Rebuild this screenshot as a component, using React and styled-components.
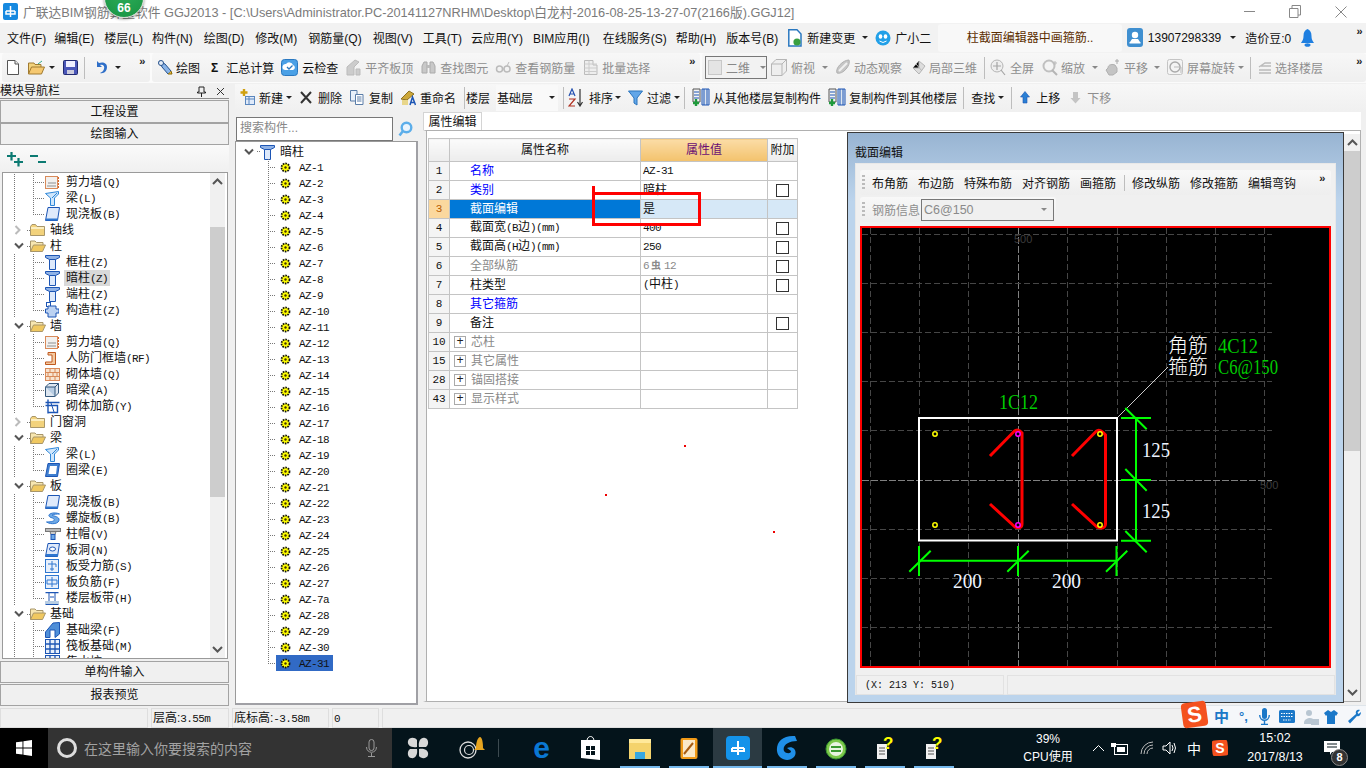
import React from 'react'
import styled, { createGlobalStyle } from 'styled-components'

const uiFont = `"Liberation Sans", "Noto Sans CJK SC", sans-serif`
const monoFont = `"Liberation Mono", "Noto Sans CJK SC", monospace`

const Global = createGlobalStyle`
  html, body { margin: 0; padding: 0; overflow: hidden; background: #f0f0f0; }
  * { box-sizing: border-box; }
`

const Page = styled.div`
  position: relative;
  width: 1366px;
  height: 768px;
  display: flex;
  flex-direction: column;
  overflow: hidden;
  font-family: ${uiFont};
  font-size: 12px;
  color: #111;
  background: #f0f0f0;
`

/* ---------- title bar ---------- */
const TitleBar = styled.div`
  height: 23px;
  flex: none;
  background: #fff;
  display: flex;
  align-items: center;
  padding-left: 3px;
`
const TitleText = styled.div`
  margin-left: 5px;
  color: #7b7b7b;
  font-size: 12.75px;
  white-space: nowrap;
`
const WinButtons = styled.div`
  margin-left: auto;
  padding-right: 2px;
  display: flex;
  align-items: center;
`
const WinBtn = styled.span`
  width: 46px;
  display: flex;
  justify-content: center;
`
const ScoreBadge = styled.div`
  position: absolute;
  left: 104px;
  top: -22px;
  width: 40px;
  height: 40px;
  border-radius: 50%;
  background: radial-gradient(circle at 50% 30%, #2fae5b, #1d9a48 75%);
  border: 1px solid #cfd8d0;
  box-shadow: 0 1px 3px rgba(0, 0, 0, 0.45);
  color: #fff;
  font-size: 12px;
  font-weight: bold;
  text-align: center;
  padding-top: 22px;
  line-height: 14px;
`

/* ---------- menu ---------- */
const MenuBar = styled.div`
  height: 30px;
  flex: none;
  display: flex;
  align-items: center;
  background: #f2f2f2;
  padding: 0 0 1px 7px;
  white-space: nowrap;
`
const MenuItem = styled.span`
  margin-left: ${({ $ml }) => $ml ?? 10}px;
  display: inline-flex;
  align-items: center;
  gap: ${({ $gap }) => $gap ?? 0}px;
`
const TipTab = styled.div`
  margin-left: 7px;
  width: 188px;
  height: 28px;
  background: #f8f8f8;
  border-radius: 3px;
  color: #5c2e00;
  text-align: center;
  line-height: 28px;
`

/* ---------- toolbars ---------- */
const ToolRow = styled.div`
  height: 30px;
  flex: none;
  display: flex;
  gap: 2px;
  padding: 0 0 1px 2px;
  background: #fbfbfb;
`
const ToolGroup = styled.div`
  width: ${({ $w }) => ($w ? `${$w}px` : 'auto')};
  flex: ${({ $w }) => ($w ? 'none' : 1)};
  display: flex;
  align-items: center;
  white-space: nowrap;
  border-radius: 3px;
  background: linear-gradient(#f7f7f7, #efefef);
`
const Tool = styled.span`
  margin-left: ${({ $ml }) => $ml ?? 0}px;
  display: inline-flex;
  align-items: center;
  flex: none;
  gap: ${({ $gap }) => $gap ?? 3}px;
  color: ${({ $off }) => ($off ? '#8e8e8e' : '#111')};
`
const Sep = styled.span`
  margin-left: ${({ $ml }) => $ml ?? 0}px;
  margin-right: ${({ $mr }) => $mr ?? 0}px;
  width: 1px;
  height: ${({ $h }) => $h ?? 22}px;
  flex: none;
  background: #bdbdbd;
`
const Caret = styled.span`
  margin-left: ${({ $ml }) => $ml ?? 0}px;
  width: 0;
  height: 0;
  flex: none;
  border: 3px solid transparent;
  border-top: 3px solid ${({ $off }) => ($off ? '#888' : '#222')};
  border-bottom: 0;
`
const More = styled.span`
  margin-left: ${({ $ml }) => ($ml === undefined ? 'auto' : `${$ml}px`)};
  margin-right: ${({ $mr }) => $mr ?? 0}px;
  align-self: flex-start;
  margin-top: 3px;
  font: bold 11px/12px ${monoFont};
  letter-spacing: -2px;
  color: #222;
  width: 10px;
`
const ViewSelect = styled.div`
  margin-left: 3px;
  width: 62px;
  height: 23px;
  flex: none;
  display: flex;
  align-items: center;
  border: 1px solid #777;
  background: #f2f2f2;
  color: #888;
  padding-left: 2px;
  gap: 4px;
`
const Swatch = styled.span`
  width: 15px;
  height: 15px;
  background: #e4e4e4;
  border: 1px solid #c8c8c8;
`

/* ---------- body ---------- */
const Body = styled.div`
  height: 625px;
  flex: none;
  display: flex;
  background: #f0f0f0;
`
const LeftPanel = styled.aside`
  width: 229px;
  flex: none;
  display: flex;
  flex-direction: column;
  padding-top: 1px;
  background: #f0f0f0;
`
const DockHeader = styled.div`
  height: 15px;
  flex: none;
  display: flex;
  align-items: center;
  line-height: 14px;
  border-bottom: 1px solid #8c8c8c;
  padding-right: 4px;
  gap: 10px;
  margin-bottom: 1px;
`
const DockTitle = styled.span`
  margin-right: auto;
`
const NavButton = styled.div`
  height: ${({ $h }) => $h ?? 22}px;
  flex: none;
  margin-top: ${({ $mt }) => $mt ?? 0}px;
  border: 1px solid #a3a3a3;
  background: #f0f0f0;
  text-align: center;
  line-height: ${({ $h }) => ($h ?? 22) - 1}px;
`
const TreeTools = styled.div`
  height: 27px;
  flex: none;
  display: flex;
  align-items: center;
  gap: 7px;
  padding-left: 7px;
  background: linear-gradient(#fafafa, #f0f0f0);
`
const LeftTreeBox = styled.div`
  height: 487px;
  flex: none;
  margin: 0 1px 0 2px;
  display: flex;
  border: 1px solid #9a9a9a;
  background: #fff;
  overflow: hidden;
`
const TreeScroll = styled.div`
  flex: 1;
  min-width: 0;
  padding-top: 1px;
  overflow: hidden;
`
const Row = styled.div`
  display: flex;
  align-items: stretch;
  height: ${({ $h }) => $h ?? 16}px;
  padding-left: ${({ $pad }) => $pad ?? 11}px;
  white-space: nowrap;
`
const Guide = styled.span`
  flex: none;
  width: 19px;
  background: repeating-linear-gradient(to bottom, #777 0 1px, transparent 1px 2px) 0 0 / 1px 100% no-repeat;
`
const Elbow = styled.span`
  flex: none;
  width: ${({ $w }) => $w ?? 12}px;
  background:
    repeating-linear-gradient(to bottom, #777 0 1px, transparent 1px 2px) 0 0 / 1px ${({ $last }) => ($last ? '50%' : '100%')} no-repeat,
    repeating-linear-gradient(to right, #777 0 1px, transparent 1px 2px) 0 50% / 100% 1px no-repeat;
`
const Toggle = styled.span`
  flex: none;
  width: 13px;
  display: flex;
  align-items: center;
`
const Stub = styled.span`
  flex: none;
  width: 3px;
  background: repeating-linear-gradient(to right, #777 0 1px, transparent 1px 2px) 0 50% / 100% 1px no-repeat;
`
const RowIcon = styled.span`
  flex: none;
  display: flex;
  align-items: center;
  width: ${({ $w }) => $w ?? 15}px;
`
const RowLabel = styled.span`
  margin-left: ${({ $ml }) => $ml ?? 5}px;
  padding: 0 ${({ $pad }) => $pad ?? 0}px;
  line-height: 16px;
  background: ${({ $sel }) => $sel ?? 'transparent'};
`
const ItemBox = styled.span`
  display: flex;
  align-items: stretch;
  padding: 0 4px;
  background: ${({ $sel }) => ($sel ? '#316ac5' : 'transparent')};
`
const Latin = styled.span`
  font-family: ${monoFont};
  font-size: 11px;
  letter-spacing: -0.6px;
  color: ${({ $color }) => $color ?? 'inherit'};
`
const RebarMark = styled.span`
  font-size: 10px;
  font-weight: bold;
  margin: 0 3px 0 2px;
`
const Scrollbar = styled.div`
  flex: none;
  width: ${({ $w }) => $w ?? 15}px;
  display: flex;
  flex-direction: column;
  background: #f0f0f0;
  margin-top: ${({ $mt }) => $mt ?? 0}px;
  margin-right: ${({ $mr }) => $mr ?? 0}px;
`
const ScrollArrow = styled.div`
  height: 17px;
  flex: none;
  display: flex;
  align-items: center;
  justify-content: center;
`
const Track = styled.div`
  flex: 1;
  min-height: 0;
`
const Thumb = styled.div`
  margin-top: ${({ $top }) => $top}px;
  height: ${({ $h }) => $h}px;
  background: #cdcdcd;
`

const Workspace = styled.main`
  flex: 1;
  min-width: 0;
  margin-left: 6px;
  display: flex;
  flex-direction: column;
`
const EditToolbar = styled.div`
  height: 27px;
  flex: none;
  margin-top: 1px;
  display: flex;
  align-items: center;
  white-space: nowrap;
  background: linear-gradient(#f7f7f7, #f0f0f0);
`
const FloorField = styled.div`
  margin-left: 6px;
  width: 62px;
  height: 26px;
  flex: none;
  display: flex;
  align-items: center;
  padding: 0 3px 0 1px;
  justify-content: space-between;
  background: #f9f9f9;
`
const Columns = styled.div`
  flex: 1;
  min-height: 0;
  display: flex;
  gap: 5px;
`
const ComponentCol = styled.section`
  width: 183px;
  flex: none;
  display: flex;
  flex-direction: column;
  padding-top: 6px;
  padding-bottom: 3px;
`
const SearchRow = styled.div`
  height: 24px;
  flex: none;
  display: flex;
  align-items: center;
  padding-left: 1px;
  background: #f0f0f0;
`
const SearchBox = styled.div`
  width: 157px;
  height: 24px;
  border: 1px solid #777;
  background: #fff;
  color: #888;
  padding-left: 3px;
  line-height: 21px;
`
const SearchIcon = styled.span`
  margin-left: 5px;
  display: flex;
`
const ComponentTree = styled.div`
  flex: 1;
  min-height: 0;
  background: #fff;
  border: 1px solid #9a9a9a;
  border-right: 2px solid #a0a0a5;
  border-bottom: 2px solid #a0a0a5;
  padding-top: 2px;
  overflow: hidden;
`
const PropCol = styled.section`
  width: 938px;
  flex: none;
  display: flex;
  flex-direction: column;
  padding-top: 1px;
  padding-bottom: 6px;
`
const TabStrip = styled.div`
  height: 18px;
  flex: none;
  display: flex;
  background: #fff;
`
const Tab = styled.div`
  width: 59px;
  text-align: center;
  line-height: 18px;
  background: #fff;
  border: 1px solid #d4d4d4;
  border-bottom: 0;
`
const PropPanel = styled.div`
  flex: 1;
  min-height: 0;
  display: flex;
  background: #fff;
  border: 1px solid #b0b0b0;
  border-left: 3px solid #f0f0f0;
  padding-right: 0;
`
const PropBody = styled.div`
  flex: 1;
  min-width: 0;
  padding-top: 7px;
  border-left: 1px solid #b0b0b0;
`
const PropTable = styled.table`
  width: 369px;
  border-collapse: collapse;
  table-layout: fixed;
  margin-left: 1px;
  line-height: 15px;
  & tbody tr { height: 19px; }
`
const HeadCell = styled.th`
  height: 23px;
  padding: 0;
  font-weight: normal;
  border: 1px solid #c4c4c4;
  background: ${({ $active }) =>
    $active ? 'linear-gradient(#fbdca6, #f3c26c)' : 'linear-gradient(#fbfbfb, #ececec)'};
  color: ${({ $active }) => ($active ? '#6a0f74' : '#111')};
`
const NumCell = styled.td`
  height: 19px;
  padding: 0;
  text-align: center;
  font-family: ${monoFont};
  font-size: 11px;
  border: 1px solid #c4c4c4;
  background: ${({ $sel }) => ($sel ? '#fbd89e' : '#f4f4f4')};
  color: ${({ $sel }) => ($sel ? '#b85c00' : '#111')};
`
const NameCell = styled.td`
  height: 19px;
  padding: 0 0 0 ${({ $plus }) => ($plus ? 4 : 20)}px;
  border: 1px solid #c4c4c4;
  white-space: nowrap;
  background: ${({ $sel }) => ($sel ? '#0078d7' : '#fff')};
  color: ${({ $sel, $tone }) => ($sel ? '#fff' : $tone ?? '#111')};
`
const PlusBox = styled.span`
  display: inline-flex;
  align-items: center;
  justify-content: center;
  width: 12px;
  height: 12px;
  margin-right: 5px;
  border: 1px solid #aaa;
  color: #222;
  font: 12px/10px ${monoFont};
  vertical-align: top;
  margin-top: 1px;
`
const ValueCell = styled.td`
  height: 19px;
  padding: 0 0 0 2px;
  border: 1px solid #c4c4c4;
  white-space: nowrap;
  overflow: hidden;
  background: ${({ $sel }) => ($sel ? '#d6e8f7' : '#fff')};
  color: ${({ $tone }) => $tone ?? '#111'};
`
const AddCell = styled.td`
  height: 19px;
  padding: 0;
  border: 1px solid #c4c4c4;
  text-align: center;
  background: ${({ $sel }) => ($sel ? '#d6e8f7' : '#fff')};
`
const CheckBox = styled.span`
  display: inline-block;
  width: 13px;
  height: 13px;
  border: 1px solid #333;
  background: #fff;
  vertical-align: middle;
`

/* ---------- floating things ---------- */
const Marker = styled.div`
  position: absolute;
  left: 592px;
  top: 192px;
  width: 109px;
  height: 34px;
  border: 3.5px solid #f00;
  &::before {
    content: '';
    position: absolute;
    left: -3.5px;
    top: -9px;
    width: 3.5px;
    height: 6px;
    background: #f00;
  }
`
const RedDot = styled.span`
  position: absolute;
  left: ${({ $x }) => $x}px;
  top: ${({ $y }) => $y}px;
  width: 2px;
  height: 2px;
  background: #e00;
`
const Dialog = styled.div`
  position: absolute;
  left: 847px;
  top: 132px;
  width: 497px;
  height: 571px;
  display: flex;
  flex-direction: column;
  border: 1px solid #3a3a3a;
  border-top-width: 1px;
  background: linear-gradient(#98b4d2, #bcd4ec 12%, #bcd4ec);
  padding: 0 7px 7px 7px;
`
const DialogTitle = styled.div`
  height: 30px;
  flex: none;
  line-height: 40px;
  color: #111;
`
const DialogInner = styled.div`
  flex: 1;
  min-height: 0;
  display: flex;
  flex-direction: column;
  background: #f0f0f0;
  border: 1px solid #e8e8e8;
  padding: 6px 4px 0 4px;
`
const DlgToolbar = styled.div`
  height: 25px;
  flex: none;
  width: ${({ $w }) => ($w ? `${$w}px` : 'auto')};
  margin-bottom: 2px;
  display: flex;
  align-items: center;
  gap: 10px;
  white-space: nowrap;
  border-radius: 3px;
  background: linear-gradient(#f8f8f8, #eeeeee);
  padding-left: 2px;
`
const Grip = styled.span`
  flex: none;
  width: 3px;
  height: 15px;
  margin-right: -3px;
  background: repeating-linear-gradient(to bottom, #bbb 0 2px, transparent 2px 4px);
`
const RebarSelect = styled.div`
  margin-left: -9px;
  width: 133px;
  height: 22px;
  display: flex;
  align-items: center;
  justify-content: space-between;
  border: 1px solid #777;
  padding: 0 6px 0 2px;
  color: #8a8a8a;
  font-size: 12.5px;
  background: #f0f0f0;
`
const CadCanvas = styled.div`
  height: 442px;
  flex: none;
  margin-top: 2px;
  border: 2px solid #f00;
  background: #000;
  & > svg { display: block; }
`
const DlgStatus = styled.div`
  height: 20px;
  flex: none;
  margin: 7px -4px 0;
  display: flex;
  gap: 3px;
`
const DlgStatusCell = styled.div`
  width: ${({ $w }) => ($w ? `${$w}px` : 'auto')};
  flex: ${({ $w }) => ($w ? 'none' : 1)};
  border: 1px solid #e2e2e2;
  display: flex;
  align-items: center;
  padding-left: 8px;
  font-family: ${monoFont};
  font-size: 10px;
`

/* ---------- status bar ---------- */
const StatusBar = styled.footer`
  height: 20px;
  flex: none;
  display: flex;
  gap: 3px;
  background: #f0f0f0;
`
const StatusCell = styled.div`
  width: ${({ $w }) => ($w ? `${$w}px` : 'auto')};
  flex: ${({ $w }) => ($w ? 'none' : 1)};
  border: 1px solid #dedede;
  padding-left: 1px;
  line-height: 18px;
  white-space: nowrap;
`
const ImeBar = styled.div`
  position: absolute;
  left: 1195px;
  top: 705px;
  width: 171px;
  height: 23px;
  display: flex;
  align-items: center;
  background: #f5f7fa;
  border: 1px solid #dfe5ea;
  border-right: 0;
  color: #1b78c8;
`
const ImeLogo = styled.div`
  position: absolute;
  z-index: 1;
  left: 1182px;
  top: 702px;
  width: 25px;
  height: 25px;
  border-radius: 4px;
  transform: rotate(-8deg);
  background: #f4511e;
  color: #fff;
  font: bold 22px/25px "Liberation Sans", sans-serif;
  text-align: center;
`
const ImeGlyph = styled.span`
  margin-left: ${({ $ml }) => $ml}px;
  font: bold ${({ $size }) => $size ?? 15}px/18px ${uiFont};
  display: flex;
`

/* ---------- taskbar ---------- */
const Taskbar = styled.div`
  height: 40px;
  flex: none;
  display: flex;
  align-items: stretch;
  background: #04141b;
  color: #fff;
`
const StartButton = styled.div`
  width: 48px;
  flex: none;
  background: #000;
  display: flex;
  align-items: center;
  justify-content: center;
`
const SearchBar = styled.div`
  width: 344px;
  flex: none;
  background: #333;
  display: flex;
  align-items: center;
  padding-left: 9px;
  color: #a2a2a2;
  font-size: 14px;
`
const Cortana = styled.span`
  width: 20px;
  height: 20px;
  border: 3px solid #ddd;
  border-radius: 50%;
  margin-right: 7px;
`
const MicSlot = styled.span`
  margin-left: auto;
  margin-right: 15px;
  display: flex;
`
const TaskSlot = styled.div`
  width: ${({ $w }) => $w ?? 49}px;
  flex: none;
  display: flex;
  align-items: center;
  justify-content: center;
  margin-left: ${({ $ml }) => $ml ?? 0}px;
  background-color: ${({ $active }) => ($active ? '#2b3a42' : 'transparent')};
  background-image: ${({ $open }) => ($open ? 'linear-gradient(#76b9ed, #76b9ed)' : 'none')};
  background-repeat: no-repeat;
  background-position: center bottom;
  background-size: ${({ $active }) => ($active ? '100%' : '40px')} 2px;
`
const TaskDivider = styled.span`
  width: 1px;
  height: 18px;
  align-self: center;
  margin-left: 1px;
  flex: none;
  background: #3c4a50;
`
const TrayCpu = styled.div`
  margin-left: 66px;
  width: 48px;
  flex: none;
  text-align: center;
  display: flex;
  flex-direction: column;
  justify-content: center;
  align-items: center;
  line-height: 18px;
  font-size: 12px;
  white-space: nowrap;
`
const TrayIcons = styled.div`
  margin-left: 20px;
  display: flex;
  align-items: center;
  flex: none;
`
const TrayItem = styled.span`
  margin-left: ${({ $ml }) => $ml ?? 0}px;
  display: flex;
  font-size: ${({ $size }) => $size ?? 13}px;
`
const TrayClock = styled.div`
  margin-left: 17px;
  width: 60px;
  flex: none;
  text-align: center;
  display: flex;
  flex-direction: column;
  justify-content: center;
  line-height: 19px;
  font-size: 12.5px;
`
const Notify = styled.div`
  margin-left: 19px;
  position: relative;
  display: flex;
  align-items: center;
`
const NotifyCount = styled.span`
  position: absolute;
  left: 7px;
  top: 21px;
  width: 17px;
  height: 17px;
  border-radius: 50%;
  background: #333;
  border: 1px solid #888;
  font-size: 11px;
  font-weight: bold;
  line-height: 15px;
  text-align: center;
`
const LogoText = styled.span`
  font: bold ${({ $size }) => $size}px/1 "Liberation Sans", sans-serif;
  color: ${({ $color }) => $color};
`

/* ---------- drawings ---------- */
const Svg = ({ w = 16, h = 16, vb, children, ...rest }) => (
  <svg width={w} height={h} viewBox={vb || `0 0 ${w} ${h}`} style={{ flex: 'none', display: 'block' }} {...rest}>{children}</svg>
)

const ChevronDown = () => (
  <Svg w={10} h={8}><polyline points="1,1.5 5,5.5 9,1.5" fill="none" stroke="#555" strokeWidth="2" /></Svg>
)
const ChevronRight = () => (
  <Svg w={8} h={10}><polyline points="1.5,1 5.5,5 1.5,9" fill="none" stroke="#bbb" strokeWidth="2" /></Svg>
)
const treeIcons = {
  closed: (
    <Svg w={15} h={12}>
      <path d="M.5 2.5 V11.5 H14.5 V2.5 H7 L5.5 .5 H2 Z" fill="#f2d27c" stroke="#a8966a" />
      <rect x="1" y="3" width="13" height="2" fill="#fbeec0" />
    </Svg>
  ),
  open: (
    <Svg w={16} h={12}>
      <path d="M.5 11.5 V1 H5 L6.5 2.5 H13 V5" fill="#f7e6b0" stroke="#a8966a" />
      <path d="M.5 11.5 L3.5 5 H15.5 L12.5 11.5 Z" fill="#f0c860" stroke="#a8966a" />
    </Svg>
  ),
  column: (
    <Svg w={15} h={16}>
      <path d="M.5 1.5 H14.5 V3.5 L10.5 5.5 H4.5 L.5 3.5 Z" fill="#8fb2e6" stroke="#1c55b4" />
      <path d="M4.5 5.5 H10.5 V15.5 H4.5 Z" fill="#dde9fb" stroke="#1c55b4" />
    </Svg>
  ),
  gcolumn: (
    <Svg w={14} h={16}>
      <rect x="1.5" y=".5" width="4" height="4" fill="#fff" stroke="#1c55b4" />
      <path d="M3 4 H11 V7 H14 V11 H11 V15 H3 V11 H.5 V7 H3 Z" fill="#bcd2f2" stroke="#1c55b4" />
    </Svg>
  ),
  wall: (
    <Svg w={14} h={13}>
      <rect x=".5" y=".5" width="12" height="12" fill="#f2f0ee" stroke="#d88a5a" />
      <path d="M2 9h9v2H2zM3 6h8v2H3z" fill="#c0c0c0" />
      <path d="M13.5 1v11" stroke="#d8662a" strokeDasharray="2 1" />
    </Svg>
  ),
  beam: (
    <Svg w={14} h={15}>
      <path d="M.5 2.5 L13.5 .5 V3 L9.5 7 V14.5 H5.5 V7 Z" fill="#cfe6fb" stroke="#2f87d8" />
      <path d="M7 7 L12 2" stroke="#2f87d8" />
    </Svg>
  ),
  slab: (
    <Svg w={15} h={14}>
      <path d="M3 .5 H14.5 L12.5 13.5 H.5 Z" fill="#dfeafb" stroke="#1c55b4" />
      <path d="M1 11.5 H13 V13.5 H1 Z" fill="#2f77d0" />
    </Svg>
  ),
  ringbeam: (
    <Svg w={15} h={14}>
      <path d="M3 .5 H14.5 L12.5 13.5 H.5 Z" fill="#3f7fd0" stroke="#1c55b4" />
      <path d="M5 3 H12 L11 11 H3.5 Z" fill="#fff" />
    </Svg>
  ),
  door: (
    <Svg w={13} h={13}>
      <path d="M3 .5 H10.5 V12.5 H.5 V10 H7 V3 H3 Z" fill="#f4c9a0" stroke="#c05a20" />
    </Svg>
  ),
  brick: (
    <Svg w={15} h={13}>
      <rect x=".5" y=".5" width="14" height="12" fill="#f8e4d0" stroke="#d88a5a" />
      <path d="M1 4.5h13M1 8.5h13M5 1v3.5M10 1v3.5M3 4.5v4M8 4.5v4M12 4.5v4M5 8.5v4M10 8.5v4" stroke="#d88a5a" />
    </Svg>
  ),
  hidden: (
    <Svg w={14} h={14}>
      <path d="M.5 4 L4 .5 H13.5 V10 L10 13.5 H.5 Z" fill="#dde6f0" stroke="#33567a" />
      <path d="M.5 4 H10 V13.5 M10 4 L13.5 .5" fill="#b8cde3" stroke="#33567a" />
    </Svg>
  ),
  bar: (
    <Svg w={15} h={15}>
      <path d="M.5 3.5 H14.5 M3 .5 V14.5 M.5 6.5 H12.5 V13.5 H3" fill="none" stroke="#1c55b4" strokeWidth="1.4" />
      <path d="M6 4 L9 13" stroke="#1c55b4" />
    </Svg>
  ),
  spiral: (
    <Svg w={16} h={13}>
      <path d="M14.5 2 C8 -1 0 3 6 5.5 C11 7 11 10 1.5 10 C6 13 15 12 14 7 C13 4 7 4 7 3 C9 2 12 2 14.5 2 Z" fill="#6ea9e6" stroke="#2f77d0" />
    </Svg>
  ),
  cap: (
    <Svg w={16} h={12}>
      <rect x=".5" y=".5" width="15" height="3" fill="#bbb" stroke="#777" />
      <path d="M5 3.5 H11 L10 6.5 H6 Z" fill="#ccc" stroke="#777" />
      <rect x="6" y="6.5" width="4" height="5" fill="#6ea9e6" stroke="#1c55b4" />
    </Svg>
  ),
  hole: (
    <Svg w={15} h={14}>
      <path d="M3 .5 H14.5 L12.5 13.5 H.5 Z" fill="#dfeafb" stroke="#1c55b4" />
      <path d="M1 11 H13 V13.5 H1 Z" fill="#2f77d0" />
      <ellipse cx="7.5" cy="6" rx="3" ry="2" fill="#fff" stroke="#1c55b4" />
    </Svg>
  ),
  slabbar: (
    <Svg w={14} h={14}>
      <rect x=".5" y=".5" width="13" height="13" fill="#e8f0fb" stroke="#2f77d0" />
      <path d="M7 2 V12 M3 5 H11 V8 M5 10 L9 10" fill="none" stroke="#2f77d0" />
    </Svg>
  ),
  negbar: (
    <Svg w={14} h={14}>
      <rect x=".5" y=".5" width="13" height="13" fill="#e8f0fb" stroke="#2f77d0" />
      <path d="M2 5 H12 V9 H2 Z M7 2 V12" fill="none" stroke="#2f77d0" />
    </Svg>
  ),
  strip: (
    <Svg w={14} h={13}>
      <path d="M.5 .5 H13.5 M.5 12.5 H13.5" stroke="#1c55b4" strokeWidth="1.5" />
      <path d="M4 1 V12 M10 1 V12 M5 5 H9" fill="none" stroke="#1c55b4" />
      <rect x="0" y="9" width="14" height="3" fill="#b8cde3" />
    </Svg>
  ),
  foundbeam: (
    <Svg w={15} h={16}>
      <path d="M.5 15.5 V10 L8 1 L14.5 .5 V12 L10 15.5 V8 L5 8 V15.5 Z" fill="#4f8fd8" stroke="#1c55b4" />
    </Svg>
  ),
  raft: (
    <Svg w={15} h={15}>
      <rect x=".5" y=".5" width="14" height="14" fill="#e8f0fb" stroke="#1c55b4" />
      <path d="M5 1V14M10 1V14M1 5H14M1 10H14" stroke="#1c55b4" strokeWidth="1.3" />
    </Svg>
  ),
}

const GearIcon = () => (
  <Svg w={11} h={11}>
    <circle cx="5.5" cy="5.5" r="4" fill="#ff0" stroke="#111" strokeWidth="1.8" strokeDasharray="1.6 1" />
    <circle cx="5.5" cy="5.5" r="1.2" fill="#443300" />
  </Svg>
)

const toolIcons = {
  newDoc: <Svg w={12} h={15}><path d="M.5 .5 H8 L11.5 4 V14.5 H.5 Z" fill="#fff" stroke="#555" /><path d="M8 .5 V4 H11.5" fill="#eee" stroke="#555" /></Svg>,
  open: <Svg w={17} h={15}><path d="M.5 14 V3 H6 L7 4.5 H13 V7" fill="#f2d27c" stroke="#a07a30" /><path d="M.5 14 L3.5 7 H16.5 L13.5 14 Z" fill="#f5c870" stroke="#a07a30" /><path d="M10 4 L14 1" stroke="#3a8" /></Svg>,
  save: <Svg w={15} h={15}><rect x=".5" y=".5" width="14" height="14" rx="1" fill="#4a56b8" stroke="#222a70" /><rect x="3" y="1" width="9" height="6" fill="#eef" /><rect x="4" y="10" width="7" height="4" fill="#ccd" /></Svg>,
  undo: <Svg w={14} h={15}><path d="M3 1 L3 7 L8 7 L6 5 C9 4 11 6 10 9 C9.5 11 8 12 6 13 C10 14 13 11 13 7 C13 3 9 1.5 5 3 Z" fill="#2f6fc8" /></Svg>,
  draw: <Svg w={17} h={17}><path d="M2 2 L8 5 L14 12 L11 15 L5 8 Z" fill="#8ab4e8" stroke="#24508c" /><path d="M11 15 L15 15 L14 12" fill="#f0c040" stroke="#886600" /><circle cx="4" cy="4" r="2.5" fill="#e6eef8" stroke="#24508c" /></Svg>,
  cloud: <Svg w={17} h={17}><rect x=".5" y=".5" width="16" height="16" rx="3" fill="#4aa0e6" stroke="#2a78c0" /><path d="M4 11 a3 3 0 0 1 1-6 a4 4 0 0 1 7 1 a2.6 2.6 0 0 1 0 5 Z" fill="#fff" /><path d="M6 8 L8 10 L11.5 6.5" fill="none" stroke="#2a78c0" strokeWidth="1.3" /></Svg>,
  level: <Svg w={15} h={17}><path d="M1 8 L9 1 L13 3 L8 8 V16 H1 Z M10 10 H14 V16 H10 Z" fill="#ccc" stroke="#bbb" /></Svg>,
  binoculars: <Svg w={15} h={15}><path d="M1 13 V6 L3 2 H6 V13 Z M14 13 V6 L12 2 H9 V13 Z" fill="#c8c8c8" stroke="#aaa" /><rect x="6" y="5" width="3" height="3" fill="#bbb" /></Svg>,
  glasses: <Svg w={16} h={15}><circle cx="4.5" cy="9" r="3" fill="none" stroke="#bbb" strokeWidth="1.5" /><circle cx="12" cy="9" r="3" fill="none" stroke="#bbb" strokeWidth="1.5" /><path d="M7.5 9 H9 M12 6 L14 2" stroke="#bbb" /></Svg>,
  batch: <Svg w={15} h={17}><path d="M1.5 1.5 H10 V6 H14 V15.5 H1.5 Z" fill="#eee" stroke="#bbb" /><path d="M1.5 5 H14 M1.5 9 H14 M1.5 12.5 H14 M6 1.5 V15.5" stroke="#ccc" /></Svg>,
  cube: <Svg w={16} h={17}><path d="M.5 5 L5 .5 H15.5 V12 L11 16.5 H.5 Z" fill="#eee" stroke="#b5b5b5" /><path d="M.5 5 H11 V16.5 M11 5 L15.5 .5" fill="none" stroke="#b5b5b5" /></Svg>,
  orbit: <Svg w={16} h={17}><path d="M2 14 C0 9 8 1 14 1 C16 6 8 16 2 14 Z" fill="#c6c6c6" stroke="#b0b0b0" /><path d="M4 12 L12 4" stroke="#f0f0f0" strokeWidth="2" /></Svg>,
  local3d: <Svg w={14} h={15}><path d="M7 1 L13 6 L7 14 L1 8 Z" fill="#ddd" stroke="#b5b5b5" /><path d="M4 4 L10 11 M7 1 L7 8 L1 8" stroke="#b5b5b5" /></Svg>,
  fit: <Svg w={16} h={17}><circle cx="7" cy="7" r="6" fill="#eee" stroke="#b5b5b5" /><path d="M7 3 V11 M3 7 H11 M11 11 L15 16" stroke="#a5a5a5" strokeWidth="1.2" /></Svg>,
  zoom: <Svg w={16} h={17}><circle cx="7" cy="7" r="5.5" fill="#f4f4f4" stroke="#c0c0c0" strokeWidth="2" /><path d="M10 11 L15 16" stroke="#b5b5b5" strokeWidth="2" /><path d="M13 2 V6 M11 4 H15" stroke="#bbb" /></Svg>,
  pan: <Svg w={16} h={17}><path d="M3 9 C3 5 8 5 10 6 L12 9 V13 L8 16 H4 L1 11 Z" fill="#c4c4c4" stroke="#b0b0b0" /><path d="M12 0 V5 M10 2 H14" stroke="#aaa" /></Svg>,
  rotate: <Svg w={16} h={17}><rect x=".5" y=".5" width="15" height="15" rx="2" fill="#f4f4f4" stroke="#c4c4c4" /><circle cx="8" cy="8" r="5" fill="none" stroke="#aaa" strokeWidth="1.4" /><path d="M7 8 H14 V14" fill="none" stroke="#bbb" /></Svg>,
  floorPick: <Svg w={14} h={15}><path d="M1 7 L7 3 H13 M1 10 H13 M1 13 H13 M3 6 H13" fill="none" stroke="#bbb" strokeWidth="1.4" /></Svg>,
  addNew: <Svg w={15} h={17}><path d="M4 0 V7 M.5 3.5 H7.5" stroke="#d0a010" strokeWidth="2.4" /><rect x="5.5" y="7.5" width="9" height="8" fill="#dfeafa" stroke="#5a86bd" /><path d="M6 10 H14 M9 8 V15" stroke="#5a86bd" /></Svg>,
  remove: <Svg w={12} h={13}><path d="M1 1 L11 12 M11 1 L1 12" stroke="#333" strokeWidth="2" /></Svg>,
  copy: <Svg w={15} h={15}><path d="M1.5 .5 H8 V11 H1.5 Z" fill="#e8f0fa" stroke="#5a7da8" /><path d="M6.5 4.5 H14 V14.5 H6.5 Z" fill="#fff" stroke="#5a7da8" /><path d="M8 7 H12.5 M8 9 H12.5 M8 11 H12.5" stroke="#5a7da8" /></Svg>,
  rename: <Svg w={16} h={16}><path d="M1 9 L9 1 L14 4 L7 10 Z" fill="#cda83a" stroke="#8c7020" /><path d="M2 10 H8 V15 H2 Z" fill="#e8d68a" /><path d="M10 15 L12.5 7 L15.5 15 M11 12.5 H14.5" fill="none" stroke="#1c55b4" strokeWidth="1.5" /></Svg>,
  sort: <Svg w={17} h={19}><path d="M1 8 L4 1 L7 8 M2 6 H6" fill="none" stroke="#2350b0" strokeWidth="1.2" /><path d="M1 11 H7 L1 18 H7" fill="none" stroke="#b03020" strokeWidth="1.2" /><path d="M12 1 V17 M9.5 14 L12 18 L14.5 14" fill="none" stroke="#333" strokeWidth="1.2" /></Svg>,
  filter: <Svg w={15} h={16}><path d="M.5 1 H14.5 L9 8 V15 L6 13 V8 Z" fill="#62a6e8" stroke="#2a74bd" /></Svg>,
  copyIn: <Svg w={18} h={19}><path d="M1 1 H8 V14 H1 Z" fill="#f4f4f4" stroke="#555" /><path d="M2 4 H7 M2 7 H7 M2 10 H7" stroke="#1c55b4" /><path d="M10 1 H17 V17 H10 Z M12 1 V17 M15 1 V17" fill="#dde6f0" stroke="#1c55b4" /><path d="M4 11 V18 M1 15 H7" stroke="#1f9a3c" strokeWidth="2.4" /></Svg>,
  up: <Svg w={10} h={13}><path d="M5 .5 L9.5 6 H7 V12 H3 V6 H.5 Z" fill="#2a7fd4" stroke="#1c55b4" strokeWidth=".6" /></Svg>,
  down: <Svg w={11} h={13}><path d="M5.5 12.5 L10.5 7 H8 V1 H3 V7 H.5 Z" fill="#c4c4c4" /></Svg>,
  doc: <Svg w={14} h={18}><path d="M.8 .8 H9 L13 5 V17 H.8 Z" fill="#fff" stroke="#2a78c0" strokeWidth="1.5" /><circle cx="9" cy="13" r="3.6" fill="#3aa040" /></Svg>,
  mascot: <Svg w={16} h={16}><circle cx="8" cy="8" r="7.5" fill="#22a0e8" /><ellipse cx="5.5" cy="6.5" rx="1.8" ry="2.2" fill="#fff" /><ellipse cx="10.5" cy="6.5" rx="1.8" ry="2.2" fill="#fff" /><path d="M4.5 11 Q8 14 11.5 11" fill="none" stroke="#fff" /></Svg>,
  user: <Svg w={16} h={19}><rect width="16" height="19" rx="3" fill="#3f8fd0" /><circle cx="8" cy="7" r="3.2" fill="#fff" /><path d="M2.5 14 H13.5 V15.5 H2.5 Z M5 11 H11 L13 14 H3 Z" fill="#fff" /></Svg>,
  bell: <Svg w={13} h={18}><path d="M6.5 0 C9 1 10.5 3 10.5 7 C10.5 11 12 12 13 14 H0 C1 12 2.5 11 2.5 7 C2.5 3 4 1 6.5 0 Z" fill="#1f7fe0" /><ellipse cx="6.5" cy="16" rx="3" ry="1.8" fill="#1f7fe0" /></Svg>,
  pin: <Svg w={9} h={11}><path d="M2 1 H7 V6 H8.5 V7 H.5 V6 H2 Z M4.5 7 V11" fill="none" stroke="#222" /></Svg>,
  close: <Svg w={9} h={9}><path d="M1 1 L8 8 M8 1 L1 8" stroke="#333" /></Svg>,
  expand: <Svg w={16} h={16}><path d="M0 5 H9 M4.5 1 V9.5 M7 11 H16 M11.5 7 V15.5" stroke="#0c7a72" strokeWidth="2.2" /></Svg>,
  collapse: <Svg w={16} h={16}><path d="M0 5 H8 M8 11 H16" stroke="#0c7a72" strokeWidth="2.2" /></Svg>,
  magnifier: <Svg w={15} h={16}><circle cx="8.5" cy="6.5" r="4.8" fill="#eaf4fd" stroke="#5caeea" strokeWidth="2.4" /><path d="M5 10 L1.5 14.5" stroke="#5caeea" strokeWidth="2.6" /></Svg>,
  arrowUp: <Svg w={11} h={7}><polyline points="1,6 5.5,1.5 10,6" fill="none" stroke="#555" strokeWidth="2" /></Svg>,
  arrowDown: <Svg w={11} h={7}><polyline points="1,1 5.5,5.5 10,1" fill="none" stroke="#555" strokeWidth="2" /></Svg>,
}

/* ---------- data ---------- */
const leftTree = [
  { icon: 'wall', t: '剪力墙', c: '(Q)' },
  { icon: 'beam', t: '梁', c: '(L)' },
  { icon: 'slab', t: '现浇板', c: '(B)', last: true },
  { folder: 'closed', t: '轴线' },
  { folder: 'open', t: '柱' },
  { icon: 'column', t: '框柱', c: '(Z)' },
  { icon: 'column', t: '暗柱', c: '(Z)', sel: true },
  { icon: 'column', t: '端柱', c: '(Z)' },
  { icon: 'gcolumn', t: '构造柱', c: '(Z)', last: true },
  { folder: 'open', t: '墙' },
  { icon: 'wall', t: '剪力墙', c: '(Q)' },
  { icon: 'door', t: '人防门框墙', c: '(RF)' },
  { icon: 'brick', t: '砌体墙', c: '(Q)' },
  { icon: 'hidden', t: '暗梁', c: '(A)' },
  { icon: 'bar', t: '砌体加筋', c: '(Y)', last: true },
  { folder: 'closed', t: '门窗洞' },
  { folder: 'open', t: '梁' },
  { icon: 'beam', t: '梁', c: '(L)' },
  { icon: 'ringbeam', t: '圈梁', c: '(E)', last: true },
  { folder: 'open', t: '板' },
  { icon: 'slab', t: '现浇板', c: '(B)' },
  { icon: 'spiral', t: '螺旋板', c: '(B)' },
  { icon: 'cap', t: '柱帽', c: '(V)' },
  { icon: 'hole', t: '板洞', c: '(N)' },
  { icon: 'slabbar', t: '板受力筋', c: '(S)' },
  { icon: 'negbar', t: '板负筋', c: '(F)' },
  { icon: 'strip', t: '楼层板带', c: '(H)', last: true },
  { folder: 'open', t: '基础' },
  { icon: 'foundbeam', t: '基础梁', c: '(F)' },
  { icon: 'raft', t: '筏板基础', c: '(M)' },
  { icon: 'raft', t: '集水坑', c: '(K)' },
]

const components = [
  ...Array.from({ length: 27 }, (_, i) => `AZ-${i + 1}`),
  'AZ-7a', 'AZ-28', 'AZ-29', 'AZ-30', 'AZ-31',
]

const BLUE = '#0000ff'
const GREY = '#8a8a8a'
const props = [
  { n: '1', name: '名称', tone: BLUE, mono: 'AZ-31' },
  { n: '2', name: '类别', tone: BLUE, val: '暗柱', check: true },
  { n: '3', name: '截面编辑', val: '是', sel: true },
  { n: '4', name: '截面宽', unit: '(B', mid: '边', end: ')(mm)', mono: '400', check: true },
  { n: '5', name: '截面高', unit: '(H', mid: '边', end: ')(mm)', mono: '250', check: true },
  { n: '6', name: '全部纵筋', tone: GREY, rebar: true, check: true },
  { n: '7', name: '柱类型', paren: '中柱', check: true },
  { n: '8', name: '其它箍筋', tone: BLUE },
  { n: '9', name: '备注', check: true },
  { n: '10', name: '芯柱', tone: GREY, plus: true },
  { n: '15', name: '其它属性', tone: GREY, plus: true },
  { n: '28', name: '锚固搭接', tone: GREY, plus: true },
  { n: '43', name: '显示样式', tone: GREY, plus: true },
]

/* ---------- small parts ---------- */
const LeftTreeRow = ({ item }) => {
  if (item.folder) {
    return (
      <Row>
        <Toggle>{item.folder === 'open' ? <ChevronDown /> : <ChevronRight />}</Toggle>
        <Stub />
        <RowIcon $w={16}>{treeIcons[item.folder]}</RowIcon>
        <RowLabel $ml={4}>{item.t}</RowLabel>
      </Row>
    )
  }
  return (
    <Row>
      <Guide />
      <Elbow $last={item.last} />
      <RowIcon>{treeIcons[item.icon]}</RowIcon>
      <RowLabel $sel={item.sel ? '#d9d9d9' : undefined} $ml={4} $pad={2}>
        {item.t}<Latin>{item.c}</Latin>
      </RowLabel>
    </Row>
  )
}

const Dash = ({ d, bright }) => (
  <path d={d} stroke={bright ? '#808080' : '#464646'} strokeDasharray={bright ? '7 2' : '6 3'} fill="none" shapeRendering="crispEdges" />
)

const CadText = styled.text`
  font-family: "Liberation Serif", serif;
  font-size: ${({ $size }) => $size ?? 22}px;
`
const CadDim = styled.text`
  font-family: "Liberation Sans", sans-serif;
  font-size: 11px;
`
const CadLabel = styled.text`
  font-family: "Noto Sans CJK SC", sans-serif;
  font-size: 20px;
  font-weight: 300;
`

const fit = { lengthAdjust: 'spacingAndGlyphs' }

const SectionDrawing = () => {
  const vs = [870, 919, 968, 1018, 1067, 1117, 1166, 1215, 1264]
  const hs = [234, 283, 332, 381, 430, 480, 529, 578, 627]
  const dots = [[935, 434, '#ff0'], [935, 525, '#ff0'], [1100, 434, '#ff0'], [1100, 525, '#ff0'], [1018, 434, '#f0f'], [1018, 525, '#f0f']]
  const green = '#00ff00'
  return (
    <svg width="468" height="438" viewBox="862 228 468 438">
      {vs.map(x => <Dash key={x} d={`M${x + 0.5} 228V666`} bright={x === 1018} />)}
      {hs.map(y => <Dash key={y} d={`M862 ${y + 0.5}H1272`} bright={y === 480} />)}
      <CadDim x="1014" y="243" fill="#3c3c3c">500</CadDim>
      <CadDim x="1260" y="489" fill="#3c3c3c">500</CadDim>

      <path d="M1117 418 L1168 367" stroke="#fff" strokeWidth="0.8" />
      <CadLabel x="1168" y="353" fill="#fff">角筋</CadLabel>
      <CadLabel x="1168" y="374" fill="#fff">箍筋</CadLabel>
      <CadText x="1218" y="353" fill="#0c0" $size={21} textLength="40" {...fit}>4C12</CadText>
      <CadText x="1218" y="374" fill="#0c0" $size={21} textLength="60" {...fit}>C6@150</CadText>
      <CadText x="999" y="409" fill="#0c0" $size={20} textLength="39" {...fit}>1C12</CadText>

      <rect x="919" y="418" width="198" height="122.5" fill="none" stroke="#fff" strokeWidth="2" />

      <path d="M990 456 L1014 431.5 Q1018 428 1022 433 V524 Q1022 529 1015 527 L990 504" fill="none" stroke="#f00" strokeWidth="3" />
      <path d="M1072 456 L1096 431.5 Q1100 428 1105.5 435 V524 Q1105 530 1097 527 L1072 504" fill="none" stroke="#f00" strokeWidth="3" />
      {dots.map(([x, y, c]) => (
        <circle key={`${x}-${y}`} cx={x} cy={y} r="2.2" fill="#000" stroke={c} strokeWidth="1.5" />
      ))}

      <g stroke={green} strokeWidth="2" fill="none">
        <path d="M1136 418V540.7M1121 418H1151M1121 480H1151M1121 540.7H1151" />
        <path d="M1125.3 408L1146.7 429.3M1125.3 469L1146.7 490.7M1125.3 531L1146.7 552.3" />
        <path d="M919 560.7H1116.5M919 546V576M1018 546V576M1116.5 546V576" />
        <path d="M909.3 571.7L930.7 550.7M1007.3 571.7L1028.7 550.7M1106 571.7L1127.3 550.7" />
      </g>
      <CadText x="1142" y="457" fill="#eef4ff" textLength="28" {...fit}>125</CadText>
      <CadText x="1142" y="518" fill="#eef4ff" textLength="28" {...fit}>125</CadText>
      <CadText x="953" y="588" fill="#eef4ff" textLength="29" {...fit}>200</CadText>
      <CadText x="1052" y="588" fill="#eef4ff" textLength="29" {...fit}>200</CadText>
    </svg>
  )
}

const QuestionDoc = () => (
  <Svg w={18} h={24}>
    <path d="M1 8 H11 V23 H1 Z" fill="#f2f2f2" />
    <path d="M3 12 H9 M3 15 H9 M3 18 H9" stroke="#555" />
    <text x="7" y="13" fontSize="17" fontWeight="bold" fontFamily="Liberation Sans" fill="#ff0">?</text>
  </Svg>
)

export default function App() {
  return (
    <Page>
      <Global />
      <TitleBar>
        <Svg w={15} h={17}>
          <rect width="15" height="17" rx="2" fill="#1689e0" />
          <path d="M7.5 3 V14 M3 8 H12 M3 8 V11 H12 V8" fill="none" stroke="#fff" strokeWidth="1.5" />
        </Svg>
        <TitleText>广联达BIM钢筋算量软件 GGJ2013 - [C:\Users\Administrator.PC-20141127NRHM\Desktop\白龙村-2016-08-25-13-27-07(2166版).GGJ12]</TitleText>
        <WinButtons>
          <WinBtn><Svg w={11} h={11}><path d="M0 5.5H11" stroke="#888" /></Svg></WinBtn>
          <WinBtn><Svg w={12} h={13}><path d="M3 3V.5H11.5V10H9M.5 3.5H9V12.5H.5Z" fill="none" stroke="#888" /></Svg></WinBtn>
          <WinBtn><Svg w={12} h={12}><path d="M.5 .5L11.5 11.5M11.5 .5L.5 11.5" stroke="#888" /></Svg></WinBtn>
        </WinButtons>
      </TitleBar>

      <MenuBar>
        <MenuItem $ml={0}>文件(F)</MenuItem>
        <MenuItem $ml={8}>编辑(E)</MenuItem>
        <MenuItem>楼层(L)</MenuItem>
        <MenuItem $ml={9}>构件(N)</MenuItem>
        <MenuItem $ml={11}>绘图(D)</MenuItem>
        <MenuItem $ml={11}>修改(M)</MenuItem>
        <MenuItem $ml={11}>钢筋量(Q)</MenuItem>
        <MenuItem $ml={11}>视图(V)</MenuItem>
        <MenuItem>工具(T)</MenuItem>
        <MenuItem $ml={9}>云应用(Y)</MenuItem>
        <MenuItem>BIM应用(I)</MenuItem>
        <MenuItem $ml={13}>在线服务(S)</MenuItem>
        <MenuItem $ml={9}>帮助(H)</MenuItem>
        <MenuItem>版本号(B)</MenuItem>
        <MenuItem $ml={10} $gap={5}>{toolIcons.doc}新建变更</MenuItem>
        <Caret $ml={7} />
        <MenuItem $ml={7} $gap={4}>{toolIcons.mascot}广小二</MenuItem>
        <TipTab>柱截面编辑器中画箍筋..</TipTab>
        <MenuItem $ml={5} $gap={5}>{toolIcons.user}13907298339</MenuItem>
        <Caret $ml={9} />
        <MenuItem $ml={9}>造价豆:0</MenuItem>
        <MenuItem $ml={10}>{toolIcons.bell}</MenuItem>
        <More $mr={0} $ml={42}>»</More>
      </MenuBar>

      <ToolRow>
        <ToolGroup $w={148}>
          <Tool $ml={5}>{toolIcons.newDoc}</Tool>
          <Tool $ml={9}>{toolIcons.open}</Tool>
          <Caret $ml={4} />
          <Tool $ml={8}>{toolIcons.save}</Tool>
          <Sep $ml={6} />
          <Tool $ml={9}>{toolIcons.undo}</Tool>
          <Caret $ml={7} />
          <More $mr={1}>»</More>
        </ToolGroup>
        <ToolGroup $w={548}>
          <Tool $ml={5} $gap={2}>{toolIcons.draw}绘图</Tool>
          <Tool $ml={11} $gap={8}><b>Σ</b>汇总计算</Tool>
          <Tool $ml={7} $gap={4}>{toolIcons.cloud}云检查</Tool>
          <Tool $ml={8} $gap={4} $off>{toolIcons.level}平齐板顶</Tool>
          <Tool $ml={8} $gap={4} $off>{toolIcons.binoculars}查找图元</Tool>
          <Tool $ml={7} $gap={4} $off>{toolIcons.glasses}查看钢筋量</Tool>
          <Tool $ml={8} $gap={4} $off>{toolIcons.batch}批量选择</Tool>
          <More $mr={1}>»</More>
        </ToolGroup>
        <ToolGroup>
          <ViewSelect><Swatch />二维<Caret $ml={6} $off /></ViewSelect>
          <Tool $ml={4} $gap={4} $off>{toolIcons.cube}俯视</Tool>
          <Caret $ml={7} $off />
          <Tool $ml={7} $off>{toolIcons.orbit}动态观察</Tool>
          <Tool $ml={10} $off>{toolIcons.local3d}局部三维</Tool>
          <Sep $ml={7} />
          <Tool $ml={5} $gap={4} $off>{toolIcons.fit}全屏</Tool>
          <Tool $ml={8} $off>{toolIcons.zoom}缩放</Tool>
          <Caret $ml={7} $off />
          <Tool $ml={7} $off>{toolIcons.pan}平移</Tool>
          <Caret $ml={6} $off />
          <Tool $ml={7} $gap={4} $off>{toolIcons.rotate}屏幕旋转</Tool>
          <Caret $ml={3} $off />
          <Sep $ml={6} />
          <Tool $ml={7} $off>{toolIcons.floorPick}选择楼层</Tool>
          <More $mr={0}>»</More>
        </ToolGroup>
      </ToolRow>

      <Body>
        <LeftPanel>
          <DockHeader>
            <DockTitle>模块导航栏</DockTitle>
            {toolIcons.pin}
            {toolIcons.close}
          </DockHeader>
          <NavButton $h={23}>工程设置</NavButton>
          <NavButton>绘图输入</NavButton>
          <TreeTools>{toolIcons.expand}{toolIcons.collapse}</TreeTools>
          <LeftTreeBox>
            <TreeScroll>
              {leftTree.map((item, i) => <LeftTreeRow key={i} item={item} />)}
            </TreeScroll>
            <Scrollbar $mr={2}>
              <ScrollArrow>{toolIcons.arrowUp}</ScrollArrow>
              <Track><Thumb $top={37} $h={270} /></Track>
              <ScrollArrow>{toolIcons.arrowDown}</ScrollArrow>
            </Scrollbar>
          </LeftTreeBox>
          <NavButton $mt={2}>单构件输入</NavButton>
          <NavButton $mt={1}>报表预览</NavButton>
        </LeftPanel>

        <Workspace>
          <EditToolbar>
            <Tool $ml={5} $gap={4}>{toolIcons.addNew}新建</Tool>
            <Caret $ml={3} />
            <Tool $ml={8} $gap={6}>{toolIcons.remove}删除</Tool>
            <Tool $ml={7} $gap={5}>{toolIcons.copy}复制</Tool>
            <Tool $ml={7} $gap={4}>{toolIcons.rename}重命名</Tool>
            <Sep $ml={8} />
            <Tool $ml={1}>楼层</Tool>
            <FloorField>基础层<Caret /></FloorField>
            <Sep $ml={5} />
            <Tool $ml={4} $gap={4}>{toolIcons.sort}排序</Tool>
            <Caret $ml={2} />
            <Tool $ml={7} $gap={4}>{toolIcons.filter}过滤</Tool>
            <Caret $ml={3} />
            <Sep $ml={4} />
            <Tool $ml={7}>{toolIcons.copyIn}从其他楼层复制构件</Tool>
            <Tool $ml={7}>{toolIcons.copyIn}复制构件到其他楼层</Tool>
            <Sep $ml={6} />
            <Tool $ml={7}>查找</Tool>
            <Caret $ml={3} />
            <Sep $ml={7} />
            <Tool $ml={8} $gap={6}>{toolIcons.up}上移</Tool>
            <Tool $ml={10} $gap={6} $off>{toolIcons.down}下移</Tool>
          </EditToolbar>
          <Columns>
            <ComponentCol>
              <SearchRow>
                <SearchBox>搜索构件...</SearchBox>
                <SearchIcon>{toolIcons.magnifier}</SearchIcon>
              </SearchRow>
              <ComponentTree>
                <Row $h={15} $pad={8}>
                  <Toggle>
                    <ChevronDown />
                  </Toggle>
                  <Stub />
                  <RowIcon>{treeIcons.column}</RowIcon>
                  <RowLabel $ml={5}>暗柱</RowLabel>
                </Row>
                {components.map((name, i) => (
                  <Row key={name} $pad={32}>
                    <Elbow $last={i === components.length - 1} $w={8} />
                    <ItemBox $sel={name === 'AZ-31'}>
                      <RowIcon $w={11}><GearIcon /></RowIcon>
                      <RowLabel $ml={8}>
                        <Latin>{name}</Latin>
                      </RowLabel>
                    </ItemBox>
                  </Row>
                ))}
              </ComponentTree>
            </ComponentCol>

            <PropCol>
              <TabStrip><Tab>属性编辑</Tab></TabStrip>
              <PropPanel>
                <PropBody>
                  <PropTable>
                    <colgroup>
                      <col width="21" /><col width="191" /><col width="127" /><col width="30" />
                    </colgroup>
                    <thead>
                      <tr>
                        <HeadCell />
                        <HeadCell>属性名称</HeadCell>
                        <HeadCell $active>属性值</HeadCell>
                        <HeadCell>附加</HeadCell>
                      </tr>
                    </thead>
                    <tbody>
                      {props.map(p => (
                        <tr key={p.n}>
                          <NumCell $sel={p.sel}>{p.n}</NumCell>
                          <NameCell $sel={p.sel} $tone={p.tone} $plus={p.plus}>
                            {p.plus && <PlusBox>+</PlusBox>}
                            {p.name}
                            {p.unit && <><Latin>{p.unit}</Latin>{p.mid}<Latin>{p.end}</Latin></>}
                          </NameCell>
                          <ValueCell $sel={p.sel} $tone={p.rebar ? GREY : undefined}>
                            {p.mono && <Latin>{p.mono}</Latin>}
                            {p.val}
                            {p.paren && <><Latin>(</Latin>{p.paren}<Latin>)</Latin></>}
                            {p.rebar && <><Latin>6</Latin><RebarMark>虫</RebarMark><Latin $color={GREY}>12</Latin></>}
                          </ValueCell>
                          <AddCell $sel={p.sel}>{p.check && <CheckBox />}</AddCell>
                        </tr>
                      ))}
                    </tbody>
                  </PropTable>
                </PropBody>
                <Scrollbar $w={16} $mt={3}>
                  <ScrollArrow>{toolIcons.arrowUp}</ScrollArrow>
                  <Track><Thumb $top={0} $h={300} /></Track>
                  <ScrollArrow>{toolIcons.arrowDown}</ScrollArrow>
                </Scrollbar>
              </PropPanel>
            </PropCol>
          </Columns>
        </Workspace>
      </Body>

      <StatusBar>
        <StatusCell $w={148} />
        <StatusCell $w={78}>层高:<Latin>3.55m</Latin></StatusCell>
        <StatusCell $w={97}>底标高:<Latin>-3.58m</Latin></StatusCell>
        <StatusCell $w={47}><Latin>0</Latin></StatusCell>
        <StatusCell />
      </StatusBar>

      <Taskbar>
        <StartButton>
          <Svg w={16} h={16}><path d="M0 2.3L6.5 1.4V7.6H0ZM7.4 1.3L16 0V7.6H7.4ZM0 8.4H6.5V14.6L0 13.7ZM7.4 8.4H16V16L7.4 14.7Z" fill="#fff" /></Svg>
        </StartButton>
        <SearchBar>
          <Cortana />
          在这里输入你要搜索的内容
          <MicSlot>
            <Svg w={11} h={18}><rect x="3" y=".5" width="5" height="11" rx="2.5" fill="none" stroke="#999" /><path d="M.5 8 C.5 15 10.5 15 10.5 8 M5.5 14V17.5M2 17.5H9" fill="none" stroke="#999" /></Svg>
          </MicSlot>
        </SearchBar>
        <TaskSlot $w={52}>
          <Svg w={22} h={22}><path d="M10 10 C4 11 0 8 1 4 C2 0 8 0 10 3 Z M12 10 C11 4 14 0 18 1 C22 2 22 8 19 10 Z M12 12 C18 11 22 14 21 18 C20 22 14 22 12 19 Z M10 12 C11 18 8 22 4 21 C0 20 0 14 3 12 Z" fill="#d8d8d8" /></Svg>
        </TaskSlot>
        <TaskSlot $w={53}>
          <Svg w={28} h={24}>
            <circle cx="11" cy="14" r="8" fill="none" stroke="#ddd" strokeWidth="1.3" />
            <circle cx="12" cy="14" r="4.5" fill="none" stroke="#ddd" strokeWidth="1.2" />
            <path d="M19 12 C19 6 21 1 23 1 C25 1 26 6 26 12 L28 14 H17 Z" fill="#e8a520" />
          </Svg>
        </TaskSlot>
        <TaskDivider />
        <TaskSlot $ml={18}><LogoText $size={30} $color="#0a78d4">e</LogoText></TaskSlot>
        <TaskSlot>
          <Svg w={21} h={26}>
            <path d="M7 6 C7 0 14 0 14 6" fill="none" stroke="#fff" />
            <path d="M1 5 H20 V25 L1 23 Z" fill="#fff" />
            <path d="M6 11H10V15H6ZM11 11H15V15H11ZM6 16H10V20H6ZM11 16H15V20H11Z" fill="#04141b" />
          </Svg>
        </TaskSlot>
        <TaskSlot $open>
          <Svg w={22} h={22}>
            <path d="M0 2 H22 V22 H0 Z" fill="#f4d36c" />
            <path d="M0 2 H22 V6 H0 Z" fill="#ffe99a" />
            <path d="M6 15 H16 V22 H6 Z" fill="#37a7e0" />
          </Svg>
        </TaskSlot>
        <TaskSlot $open>
          <Svg w={18} h={24}>
            <rect x=".5" y="2" width="17" height="21" rx="2" fill="#f29b18" />
            <rect x="3" y="4" width="12" height="17" fill="#fbe9c8" />
            <path d="M4 18 L13 7" stroke="#a85b10" strokeWidth="2" />
          </Svg>
        </TaskSlot>
        <TaskSlot $active $open>
          <Svg w={24} h={24}>
            <rect width="24" height="24" rx="4" fill="#1493ea" />
            <path d="M12 5 V19 M6 12 H18 M6 12 V15 H18 V12" fill="none" stroke="#fff" strokeWidth="2" />
          </Svg>
        </TaskSlot>
        <TaskSlot $open>
          <Svg w={24} h={28}><path d="M20 2 C8 1 1 8 2 17 C3 25 13 29 19 23 C23 18 19 11 12 14 L16 17 C16 20 11 20 9 17 C7 11 14 7 22 7 Z" fill="#1f8fe8" /></Svg>
        </TaskSlot>
        <TaskSlot $open>
          <Svg w={22} h={24}>
            <circle cx="11" cy="13" r="10" fill="#7cc84a" stroke="#3a9a30" />
            <circle cx="11" cy="13" r="7" fill="#e8f5e0" />
            <path d="M6 11 H16 M6 15 H16" stroke="#3a9a30" strokeWidth="2" />
          </Svg>
        </TaskSlot>
        <TaskSlot $open><QuestionDoc /></TaskSlot>
        <TaskSlot $open><QuestionDoc /></TaskSlot>
        <TrayCpu><span>39%</span><span>CPU使用</span></TrayCpu>
        <TrayIcons>
          <TrayItem><Svg w={13} h={8}><polyline points="1,7 6.5,1.5 12,7" fill="none" stroke="#fff" /></Svg></TrayItem>
          <TrayItem $ml={6}><Svg w={17} h={13}><rect x="3.5" y="2.5" width="13" height="10" fill="none" stroke="#fff" /><rect x="6" y="5" width="8" height="5" fill="#fff" /><rect x="0" y="1" width="5" height="4" fill="#fff" /></Svg></TrayItem>
          <TrayItem $ml={12}><Svg w={14} h={14}><path d="M1 13 A12 12 0 0 1 13 1 M4 13 A9 9 0 0 1 13 4 M7 13 A6 6 0 0 1 13 7" fill="none" stroke="#bbb" /></Svg></TrayItem>
          <TrayItem $ml={8}><Svg w={14} h={14}><path d="M1 5H4L8 1V13L4 9H1Z" fill="none" stroke="#fff" /><path d="M10 4 Q12 7 10 10 M12 2 Q15 7 12 12" fill="none" stroke="#fff" /></Svg></TrayItem>
          <TrayItem $ml={11} $size={14}>中</TrayItem>
          <TrayItem $ml={11}><Svg w={16} h={16}><rect width="16" height="16" rx="3" fill="#f4511e" transform="rotate(-6 8 8)" /><text x="8" y="13" fontSize="14" fontWeight="bold" textAnchor="middle" fontFamily="Liberation Sans" fill="#fff">S</text></Svg></TrayItem>
        </TrayIcons>
        <TrayClock><span>15:02</span><span>2017/8/13</span></TrayClock>
        <Notify>
          <Svg w={16} h={14}><path d="M0 0H16V11H8L6 14V11H0Z" fill="#fff" /><path d="M3 3H13M3 6H13" stroke="#04141b" /></Svg>
          <NotifyCount>8</NotifyCount>
        </Notify>
      </Taskbar>

      <ScoreBadge>66</ScoreBadge>
      <RedDot $x={684} $y={445} />
      <RedDot $x={605} $y={494} />
      <RedDot $x={773} $y={531} />
      <Marker />

      <Dialog>
        <DialogTitle>截面编辑</DialogTitle>
        <DialogInner>
          <DlgToolbar>
            <Grip />
            <span>布角筋</span>
            <span>布边筋</span>
            <span>特殊布筋</span>
            <span>对齐钢筋</span>
            <span>画箍筋</span>
            <Sep $h={16} $ml={-2} $mr={-3} />
            <span>修改纵筋</span>
            <span>修改箍筋</span>
            <span>编辑弯钩</span>
            <More $mr={2}>»</More>
          </DlgToolbar>
          <DlgToolbar $w={196}>
            <Grip />
            <Tool $off>钢筋信息</Tool>
            <RebarSelect>C6@150<Caret $off /></RebarSelect>
          </DlgToolbar>
          <CadCanvas><SectionDrawing /></CadCanvas>
          <DlgStatus>
            <DlgStatusCell $w={148}>(X: 213 Y: 510)</DlgStatusCell>
            <DlgStatusCell />
          </DlgStatus>
        </DialogInner>
      </Dialog>

      <ImeBar>
        <ImeGlyph $ml={18}>中</ImeGlyph>
        <ImeGlyph $ml={10} $size={13}>°,</ImeGlyph>
        <ImeGlyph $ml={11}><Svg w={11} h={17}><rect x="3" y="0" width="5" height="11" rx="2.5" fill="#1b78c8" /><path d="M.7 7 C.7 14 10.3 14 10.3 7 M5.5 13V16.5M2 16.5H9" fill="none" stroke="#1b78c8" strokeWidth="1.4" /></Svg></ImeGlyph>
        <ImeGlyph $ml={9}><Svg w={16} h={13}><rect width="16" height="13" rx="1.5" fill="#1b78c8" /><path d="M2 3.5H14M2 6.5H14M4 10H12" stroke="#fff" strokeDasharray="1.5 1" /></Svg></ImeGlyph>
        <ImeGlyph $ml={8}><Svg w={16} h={16}><circle cx="6" cy="4" r="3" fill="#b8c6d2" /><path d="M1 14 C1 8 11 8 10 11 V15 H1Z" fill="#b8c6d2" /><rect x="8" y="10" width="8" height="6" fill="#b8c6d2" /></Svg></ImeGlyph>
        <ImeGlyph $ml={5}><Svg w={14} h={14}><path d="M4 0 L7 2 L10 0 L14 3 L12 6 L11 5 V14 H3 V5 L2 6 L0 3 Z" fill="#1b78c8" /></Svg></ImeGlyph>
        <ImeGlyph $ml={9}><Svg w={14} h={15}><path d="M13 1 C10 0 8 2 9 5 L1 12 L3 14.5 L10 7 C12 8 14 6 14 3 L11.5 5 L10.5 3.5 Z" fill="#1b78c8" /></Svg></ImeGlyph>
      </ImeBar>
      <ImeLogo>S</ImeLogo>
    </Page>
  )
}
